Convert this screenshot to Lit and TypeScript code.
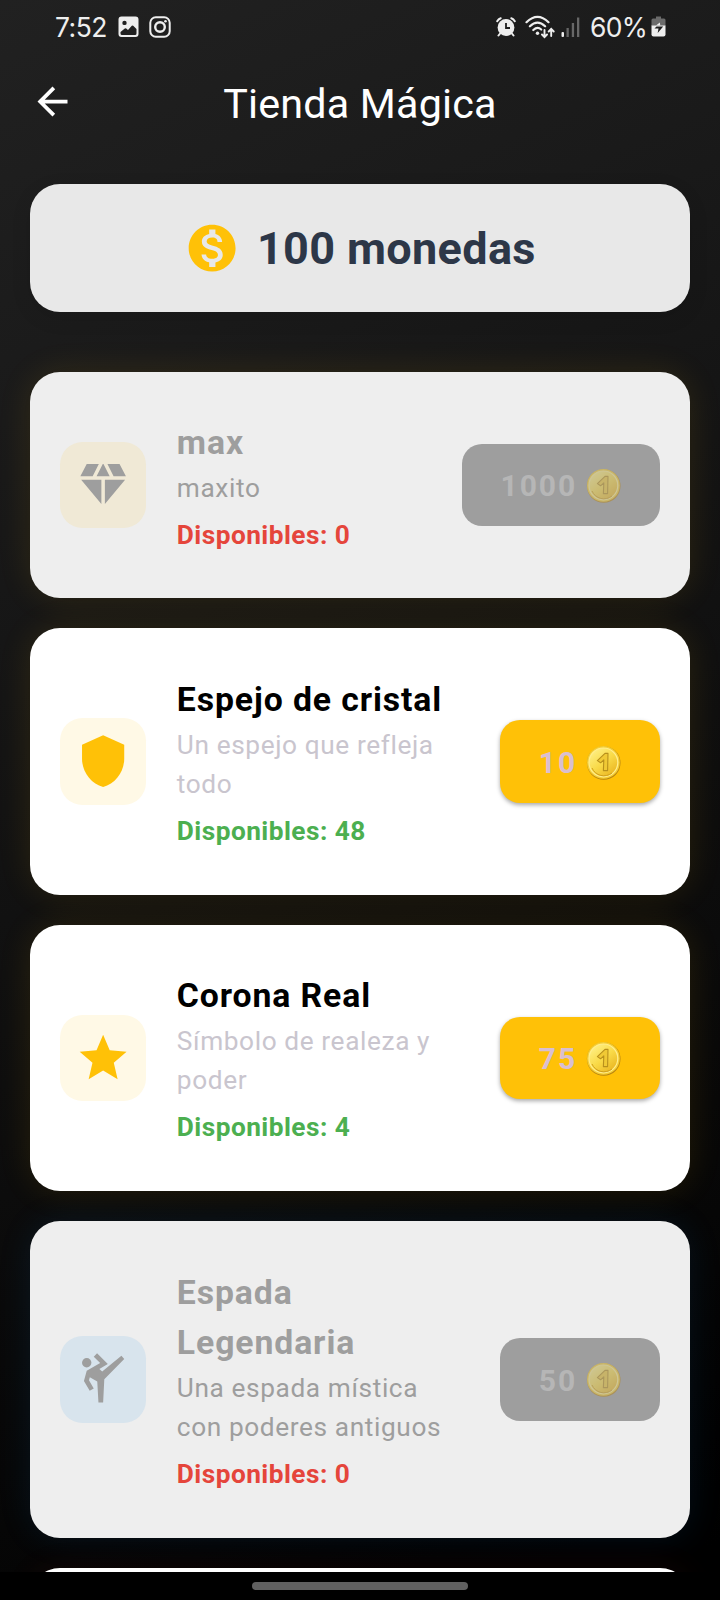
import { LitElement, html, css, svg } from "lit";
import { customElement, property } from "lit/decorators.js";
import { classMap } from "lit/directives/class-map.js";

type IconName = "diamond" | "shield" | "star" | "kick";

interface Item {
  name: string;
  description: string;
  stock: number;
  price: number;
  icon: IconName;
  tone: "amber" | "blue" | "red";
}

const items: Item[] = [
  { name: "max", description: "maxito", stock: 0, price: 1000, icon: "diamond", tone: "amber" },
  { name: "Espejo de cristal", description: "Un espejo que refleja todo", stock: 48, price: 10, icon: "shield", tone: "amber" },
  { name: "Corona Real", description: "Símbolo de realeza y poder", stock: 4, price: 75, icon: "star", tone: "amber" },
  { name: "Espada Legendaria", description: "Una espada mística con poderes antiguos", stock: 0, price: 50, icon: "kick", tone: "blue" },
];

const icons = {
  diamond: svg`<path d="M12.16 3h-.32L9.21 8.25h5.58zM16.46 8.25h5.26L19 3h-5.16zM21.38 9.75h-8.63V20.1zM11.25 20.1V9.75H2.62zM7.54 8.25 10.16 3H5L2.28 8.25z"/>`,
  shield: svg`<path d="M12 1 3 5v6c0 5.55 3.84 10.74 9 12 5.16-1.26 9-6.45 9-12V5z"/>`,
  star: svg`<path d="M12 17.27 18.18 21l-1.64-7.03L22 9.24l-7.19-.61L12 2 9.19 8.63 2 9.24l5.46 4.73L5.82 21z"/>`,
  kick: svg`<circle cx="5" cy="5" r="2"/><path d="m19.8 2-8.2 6.7-1.21-1.04 3.6-2.08L9.41 1 8 2.41l2.74 2.74L5 8.46l-1.19 4.29L6.27 17 8 16l-2.03-3.52.35-1.3L9.5 13l.5 9h2l.5-10L21 3.4z"/>`,
};

@customElement("coin-glyph")
export class CoinGlyph extends LitElement {
  static styles = css`
    :host { display: block; width: 35px; height: 35px; }
    svg { display: block; width: 35px; height: 35px; }
  `;
  render() {
    return html`<svg viewBox="0 0 35 35">
      <defs>
        <linearGradient id="face" x1="0.1" y1="0" x2="0.9" y2="1">
          <stop offset="0" stop-color="#fff28c" />
          <stop offset="0.5" stop-color="#f9da48" />
          <stop offset="1" stop-color="#e8b01c" />
        </linearGradient>
      </defs>
      <circle cx="17.7" cy="18" r="16.8" fill="#b98510" />
      <circle cx="17.4" cy="17.4" r="16.4" fill="#f5ce35" />
      <circle cx="17.4" cy="17.4" r="14.4" fill="url(#face)" stroke="#ffee90" stroke-width="1.2" />
      <path d="M6 23a13 13 0 0 0 20 5" fill="none" stroke="#d0a01c" stroke-width="1" />
      <path d="M11.4 15.6 19 8.400h3l-.4 17.200h-4.200l.4-10.800-3.200 3z" fill="#f0c935" stroke="#b8901c" stroke-width="1.1" stroke-linejoin="round" />
    </svg>`;
  }
}

@customElement("shop-card")
export class ShopCard extends LitElement {
  @property({ attribute: false }) item!: Item;

  static styles = css`
    :host { display: block; }
    .card {
      display: flex;
      align-items: center;
      gap: 30px;
      padding: 45px 30px;
      border-radius: 30px;
      background: #fff;
    }
    .soldout { background: #eee; }
    .amber { box-shadow: 0 0 34px rgba(255, 193, 7, 0.11); }
    .blue { box-shadow: 0 0 34px rgba(33, 150, 243, 0.1); }
    .badge {
      display: grid;
      place-items: center;
      flex: none;
      width: 86.25px;
      height: 86.25px;
      border-radius: 22.5px;
      background: #fff9e6;
      color: #ffc107;
    }
    .badge svg { width: 56.25px; height: 56.25px; fill: currentColor; }
    .soldout .badge { background: #f0e9d6; color: #9e9e9e; }
    .soldout.blue .badge { background: #d8e4ed; }
    .info { flex: 1; min-width: 0; padding: 1.5px 8px 0 0.6px; margin-bottom: -1.5px; }
    .name {
      font-size: 33.75px;
      line-height: 50.6px;
      font-weight: 700;
      letter-spacing: 0.9px;
      color: #000;
    }
    .description {
      font-size: 26.25px;
      line-height: 39.4px;
      letter-spacing: 0.6px;
      color: #c9c5ce;
    }
    .soldout .name, .soldout .description { color: #9e9e9e; }
    .stock {
      margin-top: 7.5px;
      font-size: 26.25px;
      line-height: 39.4px;
      font-weight: 700;
      letter-spacing: 0.45px;
      color: #4caf50;
    }
    .soldout .stock { color: #e5453b; }
    .buy {
      display: flex;
      align-items: center;
      flex: none;
      gap: 9px;
      box-sizing: border-box;
      height: 82.5px;
      padding: 0 39px 0 38.5px;
      border: 0;
      border-radius: 20px;
      background: #ffc107;
      color: #d9bfd0;
      font: 700 30px Roboto, sans-serif;
      letter-spacing: 1.9px;
      box-shadow: 0 2px 4px rgba(0, 0, 0, 0.34);
    }
    .buy span { padding-top: 2px; }
    .buy coin-glyph { margin-top: 1px; }
    .soldout .buy { background: #9e9e9e; color: #b6b6b6; box-shadow: none; }
    .soldout coin-glyph { opacity: 0.5; }
  `;

  render() {
    const { name, description, stock, price, icon, tone } = this.item;
    return html`<article class=${classMap({ card: true, soldout: stock === 0, [tone]: true })}>
      <div class="badge"><svg viewBox="0 0 24 24">${icons[icon]}</svg></div>
      <div class="info">
        <div class="name">${name}</div>
        <div class="description">${description}</div>
        <div class="stock">Disponibles: ${stock}</div>
      </div>
      <button class="buy" ?disabled=${stock === 0}><span>${price}</span><coin-glyph></coin-glyph></button>
    </article>`;
  }
}

@customElement("status-bar")
export class StatusBar extends LitElement {
  static styles = css`
    :host {
      display: flex;
      align-items: center;
      justify-content: space-between;
      box-sizing: border-box;
      height: 54px;
      padding: 0 54px 1px 55px;
      color: #eee;
      font: 400 26.5px Inter, Roboto, sans-serif;
    }
    .group { display: flex; align-items: center; }
    .time { letter-spacing: -0.5px; margin-right: 11px; }
    .percent { letter-spacing: -0.7px; margin: 0 4px 0 10px; }
    svg { display: block; }
    .photo { margin-right: 10px; }
    .alarm { margin-right: 9px; }
    .wifi { margin-right: 6px; }
  `;
  render() {
    return html`
      <div class="group">
        <span class="time">7:52</span>
        <svg class="photo" width="21" height="22" viewBox="0 0 21 22">
          <path fill="#eee" fill-rule="evenodd" d="M3.5 0.5h14a3 3 0 0 1 3 3v14.500a3 3 0 0 1-3 3h-14a3 3 0 0 1-3-3v-14.500a3 3 0 0 1 3-3zM6.500 4.700a2.200 2.200 0 1 0 0 4.400a2.200 2.200 0 1 0 0-4.400zM2.500 16v1.500q0 1.500 1.500 1.500h13q1.500 0 1.500-1.500v-4.500l-3.300-3.300q-.7-.6-1.400 0l-3.800 4.300-1.800-1.500q-.7-.5-1.400 0z" />
        </svg>
        <svg width="22" height="22" viewBox="0 0 22 22" fill="none" stroke="#eee" stroke-width="2">
          <rect x="1.300" y="1.300" width="19.400" height="19.400" rx="5.500" />
          <circle cx="11" cy="11" r="4.800" stroke-width="2.400" />
          <circle cx="16.500" cy="5.300" r="1.300" fill="#eee" stroke="none" />
        </svg>
      </div>
      <div class="group">
        <svg class="alarm" width="20" height="20" viewBox="0 0 20 20">
          <g fill="none" stroke="#eee" stroke-width="2" stroke-linecap="round">
            <path d="M1.200 4.200Q2.500 2 4.700 1.200M18.800 4.200Q17.500 2 15.300 1.200M4.500 16 2.500 18.500M15.500 16l2 2.500" />
          </g>
          <circle cx="10" cy="10.500" r="8.400" fill="#eee" />
          <path d="M10 6v5h4" fill="none" stroke="#1d1d1d" stroke-width="1.800" />
        </svg>
        <svg class="wifi" width="30" height="24" viewBox="0 0 30 24" fill="none" stroke="#eee" stroke-width="2.200" stroke-linecap="round">
          <path d="M1.500 7.200Q12.500-3.600 23.500 7.200M4.900 11.300Q12.500 3.800 20.100 11.300M8.300 15Q12.500 11.200 16.200 14.500" />
          <circle cx="12.500" cy="18.300" r="1.700" fill="#eee" stroke="none" />
          <path stroke-width="1.900" d="M19.500 15v6.500M17 19.500l2.500 2.600 2.500-2.600M26.200 21v-6.500M23.700 16.500l2.500-2.600 2.500 2.600" />
        </svg>
        <svg width="19" height="22" viewBox="0 0 19 22">
          <rect x="0.500" y="16" width="2.500" height="5" rx="1" fill="#eee" />
          <path fill="#676767" d="M5.500 12h2.300v9H5.500zM10.800 7h2.300v14h-2.300zM16 1.500h2.300v19.500H16z" />
        </svg>
        <span class="percent">60%</span>
        <svg width="15" height="21" viewBox="0 0 15 21">
          <path fill="#6b6b6b" d="M5 0.500h5v2h3q1.500 0 1.500 1.500v6h-14V4q0-1.500 1.500-1.500h3z" />
          <path fill="#eee" d="M.5 9.500h14v9q0 2-2 2h-10q-2 0-2-2z" />
          <path fill="#eee" d="M8.800 6.500 9.300 9.500H5z" />
          <path fill="#1d1d1d" d="M8.500 10.500h3.700L6.700 17l.8-4.500H3.500l2-2z" />
        </svg>
      </div>
    `;
  }
}

@customElement("app-root")
export class AppRoot extends LitElement {
  static styles = css`
    :host {
      display: flex;
      flex-direction: column;
      width: 720px;
      height: 1600px;
      overflow: hidden;
      background: linear-gradient(156deg, #212121 0%, #1a1a1a 22%, #000 97%);
      font-family: Roboto, sans-serif;
    }
    .appbar {
      display: grid;
      grid-template-columns: 70px 1fr 70px;
      align-items: center;
      flex: none;
      height: 98px;
      padding: 0 1px;
      color: #fff;
    }
    .back { justify-self: end; width: 45px; height: 45px; fill: #fff; margin: 0 -4px 4px 0; }
    .title {
      margin: 0;
      padding-top: 1px;
      text-align: center;
      font-size: 41.25px;
      line-height: 50px;
      font-weight: 400;
      letter-spacing: 0.2px;
    }
    .list {
      display: flex;
      flex-direction: column;
      gap: 30px;
      flex: 1;
      min-height: 0;
      padding: 32px 30px 0;
      overflow: hidden;
    }
    .balance {
      display: flex;
      align-items: center;
      justify-content: center;
      gap: 16.5px;
      flex: none;
      height: 127.5px;
      margin-bottom: 30px;
      border-radius: 30px;
      background: #e8e8e8;
      color: #2d3748;
      font-size: 45px;
      font-weight: 700;
      letter-spacing: 0.35px;
      box-shadow: 0 6px 20px rgba(0, 0, 0, 0.1);
    }
    .balance span { padding-top: 2px; }
    .balance svg { width: 56.25px; height: 56.25px; fill: #ffc107; }
    shop-card { flex: none; }
    .next {
      flex: none;
      height: 200px;
      border-radius: 30px;
      background: #fff;
      box-shadow: 0 0 34px rgba(244, 67, 54, 0.07);
    }
    .nav {
      display: grid;
      justify-items: center;
      align-items: start;
      flex: none;
      box-sizing: border-box;
      height: 28px;
      padding-top: 10px;
      background: #000;
    }
    .handle { width: 216px; height: 8px; border-radius: 4px; background: #606060; }
  `;

  render() {
    return html`
      <status-bar></status-bar>
      <header class="appbar">
        <svg class="back" viewBox="0 0 24 24">
          <path d="M20 11H7.830l5.590-5.590L12 4l-8 8 8 8 1.410-1.410L7.830 13H20z" />
        </svg>
        <h1 class="title">Tienda Mágica</h1>
      </header>
      <main class="list">
        <section class="balance">
          <svg viewBox="0 0 24 24">
            <path d="M12 2C6.480 2 2 6.480 2 12s4.480 10 10 10 10-4.480 10-10S17.520 2 12 2zm1.410 16.090V20h-2.670v-1.930c-1.710-.36-3.160-1.460-3.270-3.400h1.960c.1 1.050.82 1.870 2.650 1.870 1.960 0 2.400-.98 2.400-1.590 0-.83-.44-1.610-2.670-2.140-2.480-.6-4.180-1.620-4.180-3.670 0-1.720 1.390-2.840 3.110-3.210V4h2.670v1.950c1.860.45 2.790 1.860 2.850 3.390H14.300c-.05-1.110-.64-1.870-2.220-1.870-1.500 0-2.400.68-2.400 1.640 0 .84.65 1.390 2.670 1.910s4.180 1.390 4.180 3.910c-.02 1.830-1.380 2.830-3.120 3.160z" />
          </svg>
          <span>100 monedas</span>
        </section>
        ${items.map((item) => html`<shop-card .item=${item}></shop-card>`)}
        <div class="next"></div>
      </main>
      <div class="nav"><div class="handle"></div></div>
    `;
  }
}
